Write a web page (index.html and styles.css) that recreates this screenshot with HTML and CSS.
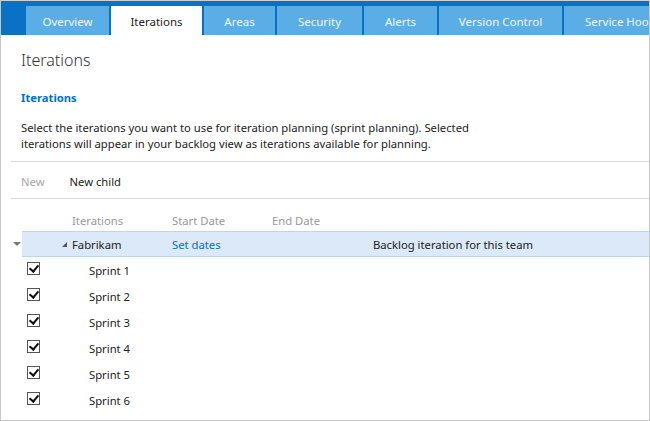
FILE: index.html
```html
<!DOCTYPE html>
<html>
<head>
<meta charset="utf-8">
<link rel="stylesheet" href="styles.css">
</head>
<body>
<div class="frame">
  <div class="tabbar">
    <div class="tab">Overview</div>
    <div class="tab active">Iterations</div>
    <div class="tab">Areas</div>
    <div class="tab">Security</div>
    <div class="tab">Alerts</div>
    <div class="tab">Version Control</div>
    <div class="tab last">Service Hooks</div>
  </div>
  <div class="content">
    <h1 class="title">Iterations</h1>
    <h2 class="subtitle">Iterations</h2>
    <p class="desc">Select the iterations you want to use for iteration planning (sprint planning). Selected<br>iterations will appear in your backlog view as iterations available for planning.</p>
    <div class="toolbar">
      <span class="tool disabled">New</span>
      <span class="tool">New child</span>
    </div>
    <div class="grid">
      <div class="row header">
        <span class="c-check"></span>
        <span class="c-name">Iterations</span>
        <span class="c-start">Start Date</span>
        <span class="c-end">End Date</span>
      </div>
      <div class="row selected">
        <span class="rowarrow"></span>
        <span class="c-check"></span>
        <span class="c-name"><span class="expander"></span>Fabrikam</span>
        <span class="c-start link">Set dates</span>
        <span class="c-end"></span>
        <span class="c-note">Backlog iteration for this team</span>
      </div>
      <div class="row"><span class="c-check"><span class="cb"></span></span><span class="c-name child">Sprint 1</span></div>
      <div class="row"><span class="c-check"><span class="cb"></span></span><span class="c-name child">Sprint 2</span></div>
      <div class="row"><span class="c-check"><span class="cb"></span></span><span class="c-name child">Sprint 3</span></div>
      <div class="row"><span class="c-check"><span class="cb"></span></span><span class="c-name child">Sprint 4</span></div>
      <div class="row"><span class="c-check"><span class="cb"></span></span><span class="c-name child">Sprint 5</span></div>
      <div class="row"><span class="c-check"><span class="cb"></span></span><span class="c-name child">Sprint 6</span></div>
    </div>
  </div>
</div>
</body>
</html>
```
FILE: styles.css
```css
* { box-sizing: border-box; }
html, body { margin: 0; padding: 0; }
body {
  width: 650px; height: 421px; overflow: hidden;
  font-family: "Segoe UI", "Noto Sans", "Open Sans", sans-serif;
  font-size: 11.25px; color: #222;
  background: #fff;
}
.frame {
  width: 650px; height: 421px;
  border: 1px solid #c6c6c6;
  border-top-color: #d0d0d0;
  overflow: hidden;
}
.tabbar {
  height: 34px;
  background: #0a72c4;
  display: flex;
  align-items: flex-end;
  padding-left: 25px;
  gap: 2px;
  white-space: nowrap;
  overflow: hidden;
}
.tab {
  height: 29px;
  background: #5aaee5;
  color: #eef6fc;
  font-size: 11.5px;
  padding-top: 2px;
  display: flex; align-items: center; justify-content: center;
  flex: none;
}
.tab:nth-child(1) { width: 83px; }
.tab:nth-child(2) { width: 91px; }
.tab:nth-child(3) { width: 71px; }
.tab:nth-child(4) { width: 85px; }
.tab:nth-child(5) { width: 73px; }
.tab:nth-child(6) { width: 123px; }
.tab:nth-child(7) { width: 100px; justify-content: flex-start; padding-left: 21px; }
.tab.active { background: #fff; color: #222; }
.content { padding: 0 0 0 10px; }
.title {
  margin: 0; padding: 13px 0 0 10px;
  font-size: 16px; font-weight: 300; color: #333;
  line-height: 24px; height: 50px;
}
.subtitle {
  margin: 0; padding: 5px 0 0 10px;
  font-size: 11.25px; font-weight: 700; color: #0072c6;
  line-height: 16px; height: 29px;
}
.desc {
  margin: 0; padding: 6px 0 0 10px;
  line-height: 16px; height: 47px;
  color: #222;
}
.toolbar {
  border-top: 1px solid #d8d8d8;
  border-bottom: 1px solid #d8d8d8;
  height: 38px;
  display: flex; align-items: center;
  padding: 3px 0 0 10px;
  gap: 25px;
}
.tool { color: #222; }
.tool.disabled { color: #a6a6a6; }
.grid { padding-top: 10px; }
.row {
  height: 26px;
  display: flex; align-items: center;
  position: relative;
}
.row.header { height: 22px; color: #999; }
.row.selected {
  background: #dbe9f8;
  border-top: 1px solid #b9d6f2;
  border-bottom: 1px solid #b9d6f2;
  margin-left: 11px;
}
.row.selected .c-check { width: 49px; }
.rowarrow {
  position: absolute; left: -9px; top: 10px;
  width: 0; height: 0;
  border-left: 4px solid transparent;
  border-right: 4px solid transparent;
  border-top: 4px solid #777;
}
.c-check { width: 60px; flex: none; display: flex; align-items: center; padding-left: 16px; }
.c-name { width: 101px; flex: none; display: flex; align-items: center; padding-left: 1px; }
.c-name.child { padding-left: 18px; width: 150px; }
.c-start { width: 100px; flex: none; }
.c-end { width: 101px; flex: none; }
.c-note { flex: none; }
.link { color: #0072c6; }
.expander {
  width: 0; height: 0;
  border-left: 5px solid transparent;
  border-bottom: 5px solid #555;
  margin-left: -10px; margin-right: 5px;
}
.cb {
  width: 13px; height: 13px;
  border: 1px solid #555;
  position: relative;
  display: inline-block;
  margin-top: -4px;
}
.cb::after {
  content: "";
  position: absolute;
  left: 3px; top: 0px;
  width: 4px; height: 7px;
  border-right: 2px solid #111;
  border-bottom: 2px solid #111;
  transform: rotate(40deg);
}
```
